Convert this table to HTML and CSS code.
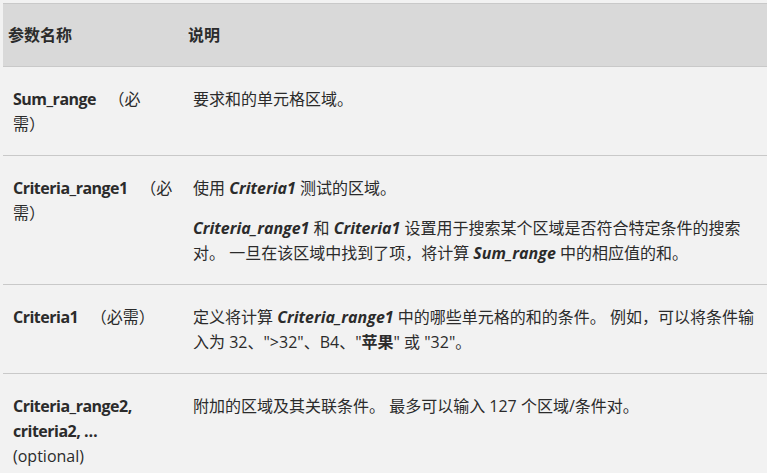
FILE: index.html
```html
<!DOCTYPE html>
<html lang="zh-CN">

<head>
    <meta charset="UTF-8">
    <title>SUMIFS 参数</title>
    <link rel="stylesheet" href="styles.css">
</head>

<body>
    <table class="params">
        <thead>
            <tr>
                <th class="col-name">参数名称</th>
                <th>说明</th>
            </tr>
        </thead>
        <tbody>
            <tr>
                <td class="name"><b>Sum_range</b>&nbsp;&nbsp; （必<br>需）</td>
                <td>
                    <p>要求和的单元格区域。</p>
                </td>
            </tr>
            <tr>
                <td class="name"><b>Criteria_range1</b>&nbsp;&nbsp; （必<br>需）</td>
                <td>
                    <p>使用 <b><i>Criteria1</i></b> 测试的区域。</p>
                    <p><b><i>Criteria_range1</i></b> 和 <b><i>Criteria1</i></b> 设置用于搜索某个区域是否符合特定条件的搜索对。 一旦在该区域中找到了项，将计算 <b><i>Sum_range</i></b> 中的相应值的和。</p>
                </td>
            </tr>
            <tr>
                <td class="name"><b>Criteria1</b>&nbsp;&nbsp; （必需）</td>
                <td>
                    <p>定义将计算 <b><i>Criteria_range1</i></b> 中的哪些单元格的和的条件。 例如，可以将条件输入为 32、"&gt;32"、B4、"<b>苹果</b>" 或 "32"。</p>
                </td>
            </tr>
            <tr>
                <td class="name"><b>Criteria_range2, criteria2, …</b><br>(optional)</td>
                <td>
                    <p>附加的区域及其关联条件。 最多可以输入 127 个区域/条件对。</p>
                </td>
            </tr>
        </tbody>
    </table>
</body>

</html>
```

FILE: styles.css
```css
html,
body {
    background-color: #f2f2f2;
}

body {
    margin: 3px 0 0 3px;
    font-family: "Open Sans", "Noto Sans CJK SC", sans-serif;
    font-size: 16px;
    line-height: 25px;
    color: #2b2b2b;
}

.params {
    width: 764px;
    border-collapse: collapse;
    border-top: 1px solid #c9c9c9;
    table-layout: fixed;
}

.params tr {
    border-bottom: 1px solid #c9c9c9;
}

.params th {
    height: 62px;
    padding: 0 5px;
    background-color: #d9d9d9;
    text-align: left;
    font-weight: 700;
}

.params .col-name {
    width: 170px;
}

.params td {
    padding: 20px 10px 18px 10px;
    vertical-align: top;
}

.params td.name {
    padding-right: 4px;
}

.params td.name b {
    letter-spacing: -0.5px;
}

.params p {
    margin: 0 0 15px 0;
}

.params p:last-child {
    margin-bottom: 0;
}
```
